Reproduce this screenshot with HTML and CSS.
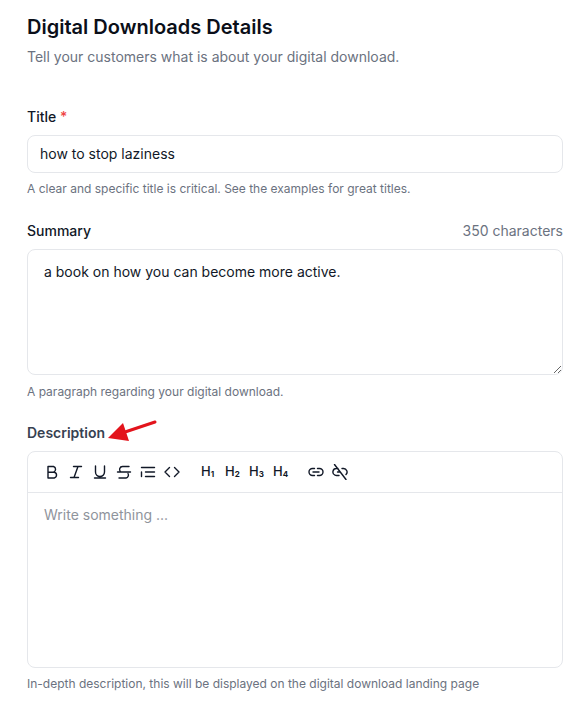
FILE: index.html
```html
<!DOCTYPE html>
<html lang="en">
<head>
<meta charset="utf-8">
<title>Digital Downloads Details</title>
<link rel="stylesheet" href="styles.css">
</head>
<body>
<main class="page">
  <header class="head">
    <h1 class="title">Digital Downloads Details</h1>
    <p class="sub">Tell your customers what is about your digital download.</p>
  </header>

  <section class="field field-title">
    <div class="label-row"><label class="label">Title <span class="req">*</span></label></div>
    <input class="input" type="text" value="how to stop laziness">
    <p class="hint">A clear and specific title is critical. See the examples for great titles.</p>
  </section>

  <section class="field field-summary">
    <div class="label-row"><label class="label">Summary</label><span class="count">350 characters</span></div>
    <textarea class="area">a book on how you can become more active.</textarea>
    <p class="hint hint-summary">A paragraph regarding your digital download.</p>
  </section>

  <section class="field field-desc">
    <div class="label-row desc-row">
      <label class="label label-desc">Description</label>
      <svg class="arrow" width="50" height="24" viewBox="0 0 50 24"><path d="M48 2 L18 12" stroke="#e3141c" stroke-width="3" stroke-linecap="round"/><path d="M1 18 L16 3 L22 21 Z" fill="#e3141c"/></svg>
    </div>
    <div class="editor">
      <div class="toolbar">
        <div class="tools">
          <svg class="ic" viewBox="0 0 16 16"><path d="M4 2.500h5.500a3 3 0 0 1 0 5.700H4zM4 8.200h6.300a3 3 0 0 1 0 5.800H4z"/></svg>
          <svg class="ic" viewBox="0 0 16 16"><path d="M5.500 2.500h8M2.500 13.500h8M10 2.500 6 13.500"/></svg>
          <svg class="ic" viewBox="0 0 16 16"><path d="M3.500 2v6a4.500 4.500 0 0 0 9 0V2M2.500 14h11"/></svg>
          <svg class="ic" viewBox="0 0 16 16"><path d="M13 2.500H6.500a3 3 0 0 0-2 5.200M1.500 8h13M12 9.500a3 3 0 0 1-2 4.500H3"/></svg>
          <svg class="ic" viewBox="0 0 16 16"><path d="M1.500 3.500h13M5.500 8h9M5.500 12.500h9M1.500 8v4.500"/></svg>
          <svg class="ic" viewBox="0 0 16 16"><path d="M5.500 3.500 1 8l4.500 4.500M10.500 3.500 15 8l-4.500 4.500"/></svg>
        </div>
        <div class="tools heads">
          <span class="hd">H<small>1</small></span>
          <span class="hd">H<small>2</small></span>
          <span class="hd">H<small>3</small></span>
          <span class="hd">H<small>4</small></span>
        </div>
        <div class="tools links">
          <svg class="ic" viewBox="0 0 16 16"><path d="M6.500 4.500H4.500a3.500 3.500 0 0 0 0 7h2M9.500 4.500h2a3.500 3.500 0 0 1 0 7h-2M5 8h6"/></svg>
          <svg class="ic" viewBox="0 0 16 16"><path d="M6 4.500H4.500a3.500 3.500 0 0 0-1.500 6.700A3.500 3.500 0 0 0 4.500 11.500H7M10 4.500h1.500a3.500 3.500 0 0 1 2.500 6M5.500 8H8M2.500 .5l11.500 15"/></svg>
        </div>
      </div>
      <div class="editor-body">Write something ...</div>
    </div>
    <p class="hint">In-depth description, this will be displayed on the digital download landing page</p>
  </section>
</main>
</body>
</html>
```

FILE: styles.css
```css
* { box-sizing: border-box; }
html, body { margin: 0; padding: 0; background: #fff; }
body { font-family: Inter, "Liberation Sans", sans-serif; color: #111827; }
.page { width: 587px; height: 713px; padding: 13px 24px 0 27px; overflow: hidden; }
.title { margin: 0; font-size: 20px; line-height: 28px; font-weight: 600; color: #0b0f19; }
.sub { margin: 6px 0 0; font-size: 14px; line-height: 20px; color: #6b7280; }
.field-title { margin-top: 40px; }
.field-summary { margin-top: 24px; }
.field-desc { margin-top: 23px; }
.label-row { display: flex; justify-content: space-between; align-items: center; height: 20px; margin-bottom: 8px; }
.label { font-size: 14px; font-weight: 500; line-height: 20px; color: #111827; }
.label-desc { color: #374151; font-weight: 600; }
.req { color: #ef4444; }
.count { font-size: 14px; line-height: 20px; color: #6b7280; margin-bottom: 1px; }
.desc-row { position: relative; justify-content: flex-start; margin-bottom: 8px; }
.arrow { position: absolute; left: 80px; top: -3px; }
.input, .area { display: block; width: 100%; background: #fff; border: 1px solid #e5e7eb; border-radius: 8px; font: 14px/20px Inter, "Liberation Sans", sans-serif; color: #111827; outline: 0; }
.input { height: 38px; padding: 0 12px 2px; }
.area { height: 126px; padding: 12px 16px; }
.hint { margin: 8px 0 0; font-size: 12px; line-height: 16px; color: #6b7280; }
.hint-summary { margin-top: 9px; }
.editor { border: 1px solid #e5e7eb; border-radius: 8px; height: 217px; }
.toolbar { display: flex; align-items: center; height: 41px; padding: 0 16px; border-bottom: 1px solid #e5e7eb; }
.tools { display: flex; align-items: center; gap: 8px; }
.heads { margin-left: 21px; gap: 8px; }
.links { margin-left: 19px; gap: 8px; }
.ic { width: 16px; height: 16px; fill: none; stroke: #111827; stroke-width: 1.4; stroke-linecap: round; stroke-linejoin: round; }
.hd { width: 16px; font-size: 13px; font-weight: 500; line-height: 16px; color: #111827; white-space: nowrap; }
.hd small { font-size: 8px; font-weight: 700; vertical-align: -1px; }
.editor-body { padding: 12px 16px; font-size: 14px; line-height: 20px; color: #8f949c; }
```
